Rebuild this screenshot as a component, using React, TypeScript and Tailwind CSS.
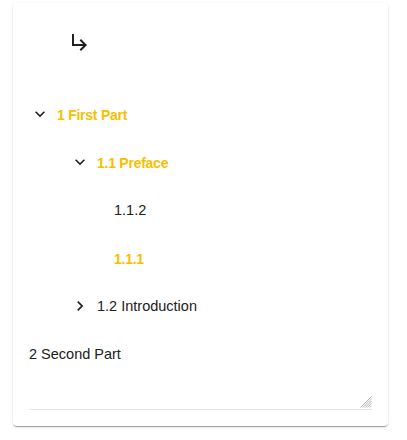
import React from 'react'

type Node = {
  label: string
  indent: number
  icon?: 'down' | 'right'
  active?: boolean
}

const rows: Node[] = [
  { label: '1 First Part', indent: 1, icon: 'down', active: true },
  { label: '1.1 Preface', indent: 41, icon: 'down', active: true },
  { label: '1.1.2', indent: 85 },
  { label: '1.1.1', indent: 85, active: true },
  { label: '1.2 Introduction', indent: 41, icon: 'right' },
  { label: '2 Second Part', indent: 0 },
]

function Chevron({ dir }: { dir: 'down' | 'right' }) {
  return (
    <svg viewBox="0 0 24 24" className="w-5 h-5 shrink-0 fill-[#212121]">
      {dir === 'down' ? (
        <path d="M16.59 8.59 12 13.17 7.41 8.59 6 10l6 6 6-6z" />
      ) : (
        <path d="M10 6 8.59 7.41 13.17 12l-4.58 4.59L10 18l6-6z" />
      )}
    </svg>
  )
}

export default function App() {
  return (
    <div className="min-h-screen bg-white font-['Liberation_Sans',Arial,sans-serif] pt-[3px] px-[13px]">
      <div className="w-[375px] bg-white rounded-[4px] shadow-[0_2px_1px_-1px_rgba(0,0,0,0.2),0_1px_1px_0_rgba(0,0,0,0.14),0_1px_3px_0_rgba(0,0,0,0.12)] px-4 pb-4">
        {/* top arrow */}
        <div className="h-[87px] pt-[27px] pl-[39px]">
          <svg viewBox="0 0 24 24" className="w-6 h-6 fill-[#212121]">
            <path d="m19 15-6 6-1.42-1.42L15.17 16H4V4h2v10h9.17l-3.59-3.58L13 9l6 6z" />
          </svg>
        </div>

        {/* tree */}
        {rows.map((r) => (
          <div key={r.label} className="h-12 flex items-center pt-[2px]" style={{ paddingLeft: r.indent }}>
            {r.icon && (
              <span className="mr-[7px] flex items-center -mt-[2px]">
                <Chevron dir={r.icon} />
              </span>
            )}
            <span
              className={
                r.active
                  ? 'text-[14px] font-bold text-[#f6c000] tracking-[-0.25px]'
                  : 'text-[14.5px] text-[#212121]'
              }
            >
              {r.label}
            </span>
          </div>
        ))}

        {/* input area */}
        <div className="relative h-[32px] border-b border-[#e8e8e8]">
          <svg viewBox="0 0 12 12" className="absolute right-0 bottom-[1px] w-3 h-3 stroke-[#9e9e9e]" strokeWidth="0.8">
            <line x1="11.5" y1="0.5" x2="0.5" y2="11.5" />
            <line x1="11.5" y1="2.8" x2="2.8" y2="11.5" />
            <line x1="11.5" y1="5.1" x2="5.1" y2="11.5" />
            <line x1="11.5" y1="7.4" x2="7.4" y2="11.5" />
            <line x1="11.5" y1="9.7" x2="9.7" y2="11.5" />
          </svg>
        </div>
      </div>
    </div>
  )
}
